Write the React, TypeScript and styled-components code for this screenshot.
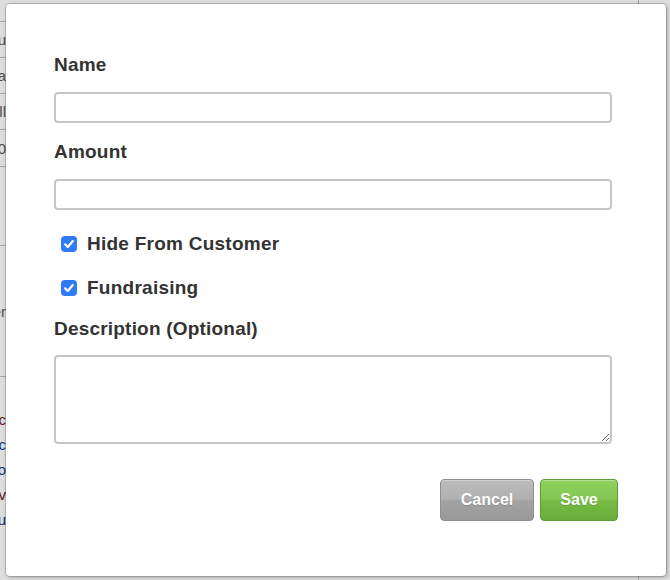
import React from 'react'
import styled, { createGlobalStyle } from 'styled-components'

const GlobalStyle = createGlobalStyle`
  html, body {
    margin: 0;
    padding: 0;
    width: 670px;
    height: 580px;
    overflow: hidden;
    background: #f2f2f2;
    font-family: "Liberation Sans", Arial, Helvetica, sans-serif;
  }
`

/* ---------- page behind the dialog ---------- */

const Page = styled.div`
  position: relative;
  width: 670px;
  height: 580px;
  overflow: hidden;
  background: #f4f4f4;
`

const Sheet = styled.div`
  display: flex;
  flex-direction: column;
  margin-left: -40px;
  width: 678px;
  height: 580px;
  border-right: 1px solid #b4b4b4;
`

const TableRow = styled.div<{ $h: number; $line?: boolean }>`
  display: flex;
  align-items: center;
  height: ${p => p.$h}px;
  border-bottom: ${p => (p.$line ? '1px solid #b8b8b8' : 'none')};
  font-size: 15px;
  color: #555;
`

const Cell = styled.span<{ $color?: string }>`
  width: 46px;
  text-align: right;
  white-space: nowrap;
  color: ${p => p.$color || '#555'};
`

const Dim = styled.div`
  position: absolute;
  inset: 0;
  background: rgba(0, 0, 0, 0.09);
`

/* ---------- dialog ---------- */

const Modal = styled.div`
  position: absolute;
  left: 6px;
  top: 4px;
  width: 660px;
  height: 572px;
  box-sizing: border-box;
  padding: 50px 48px 0 48px;
  background: #fff;
  border-radius: 4px;
  box-shadow: 0 0 0 1px rgba(0, 0, 0, 0.14), 1px 1px 4px rgba(0, 0, 0, 0.3);
  color: #333;
  display: flex;
  flex-direction: column;
`

const Label = styled.label<{ $mt?: number; $mb?: number }>`
  display: block;
  font-size: 19px;
  line-height: 22px;
  letter-spacing: 0.2px;
  font-weight: bold;
  color: #333;
  margin: ${p => p.$mt ?? 0}px 0 ${p => p.$mb ?? 16}px 0;
`

const TextInput = styled.input`
  display: block;
  box-sizing: border-box;
  width: 558px;
  height: 31px;
  margin: 0 0 18px 0;
  border: 2px solid #c6c6c6;
  border-radius: 4px;
  background: #fff;
  outline: none;
`

const CheckRow = styled.label<{ $mt: number }>`
  display: flex;
  align-items: center;
  gap: 10px;
  margin: ${p => p.$mt}px 0 0 7px;
  height: 22px;
  font-size: 19px;
  letter-spacing: 0.25px;
  font-weight: bold;
  color: #333;
`

const Box = styled.span`
  display: flex;
  align-items: center;
  justify-content: center;
  width: 16px;
  height: 16px;
  border-radius: 4px;
  background: #2f7bf5;
`

const TextArea = styled.textarea`
  display: block;
  box-sizing: border-box;
  width: 558px;
  height: 89px;
  margin: 0;
  border: 2px solid #c6c6c6;
  border-radius: 4px;
  resize: vertical;
  outline: none;
`

const Actions = styled.div`
  display: flex;
  justify-content: flex-end;
  gap: 6px;
  margin: 35px 0 0 0;
`

const Button = styled.button<{ $kind: 'cancel' | 'save' }>`
  height: 42px;
  padding: 0 ${p => (p.$kind === 'cancel' ? '19px' : '18px')};
  min-width: ${p => (p.$kind === 'cancel' ? '94px' : '78px')};
  border-radius: 4px;
  font-family: "Liberation Sans", Arial, sans-serif;
  font-size: 16px;
  font-weight: bold;
  color: #fff;
  text-shadow: 0 1px 1px rgba(0, 0, 0, 0.15);
  cursor: pointer;
  border: 1px solid ${p => (p.$kind === 'cancel' ? '#8e8e8e' : '#5c9e33')};
  background: ${p =>
    p.$kind === 'cancel'
      ? 'linear-gradient(#bcbcbc 0%, #b0b0b0 48%, #a3a3a3 52%, #999 100%)'
      : 'linear-gradient(#90d25e 0%, #83c752 48%, #75bb44 52%, #69ae3a 100%)'};
  box-shadow: inset 0 1px 0 rgba(255, 255, 255, 0.35);
`

const Check = () => (
  <svg width="12" height="12" viewBox="0 0 12 12">
    <path d="M2.2 6.4 L4.8 9 L9.8 3" fill="none" stroke="#fff" strokeWidth="2.2" strokeLinecap="round" strokeLinejoin="round" />
  </svg>
)

const rows: { h: number; text?: string; color?: string; line?: boolean }[] = [
  { h: 21, line: true },
  { h: 35, text: 'Menu', line: true },
  { h: 35, text: 'Data', line: true },
  { h: 35, text: 'Sall', line: true },
  { h: 36, text: '100', line: true },
  { h: 78, line: true },
  { h: 130, text: 'Her', line: true },
  { h: 30 },
  { h: 25, text: 'Doc', color: '#6a1a1a' },
  { h: 25, text: 'Doc', color: '#1a3a8a' },
  { h: 25, text: 'Info', color: '#1a3a8a' },
  { h: 25, text: 'Nev', color: '#5a1a1a' },
  { h: 25, text: 'Du', color: '#1a2a6a' },
]

export default function App() {
  return (
    <>
      <GlobalStyle />
      <Page>
        <Sheet>
          {rows.map((r, i) => (
            <TableRow key={i} $h={r.h} $line={r.line}>
              <Cell $color={r.color}>{r.text}</Cell>
            </TableRow>
          ))}
        </Sheet>
        <Dim />

        <Modal>
          <Label>Name</Label>
          <TextInput type="text" />

          <Label>Amount</Label>
          <TextInput type="text" />

          <CheckRow $mt={5}>
            <Box><Check /></Box>
            Hide From Customer
          </CheckRow>
          <CheckRow $mt={22}>
            <Box><Check /></Box>
            Fundraising
          </CheckRow>

          <Label $mt={19} $mb={15}>Description (Optional)</Label>
          <TextArea />

          <Actions>
            <Button $kind="cancel">Cancel</Button>
            <Button $kind="save">Save</Button>
          </Actions>
        </Modal>
      </Page>
    </>
  )
}
